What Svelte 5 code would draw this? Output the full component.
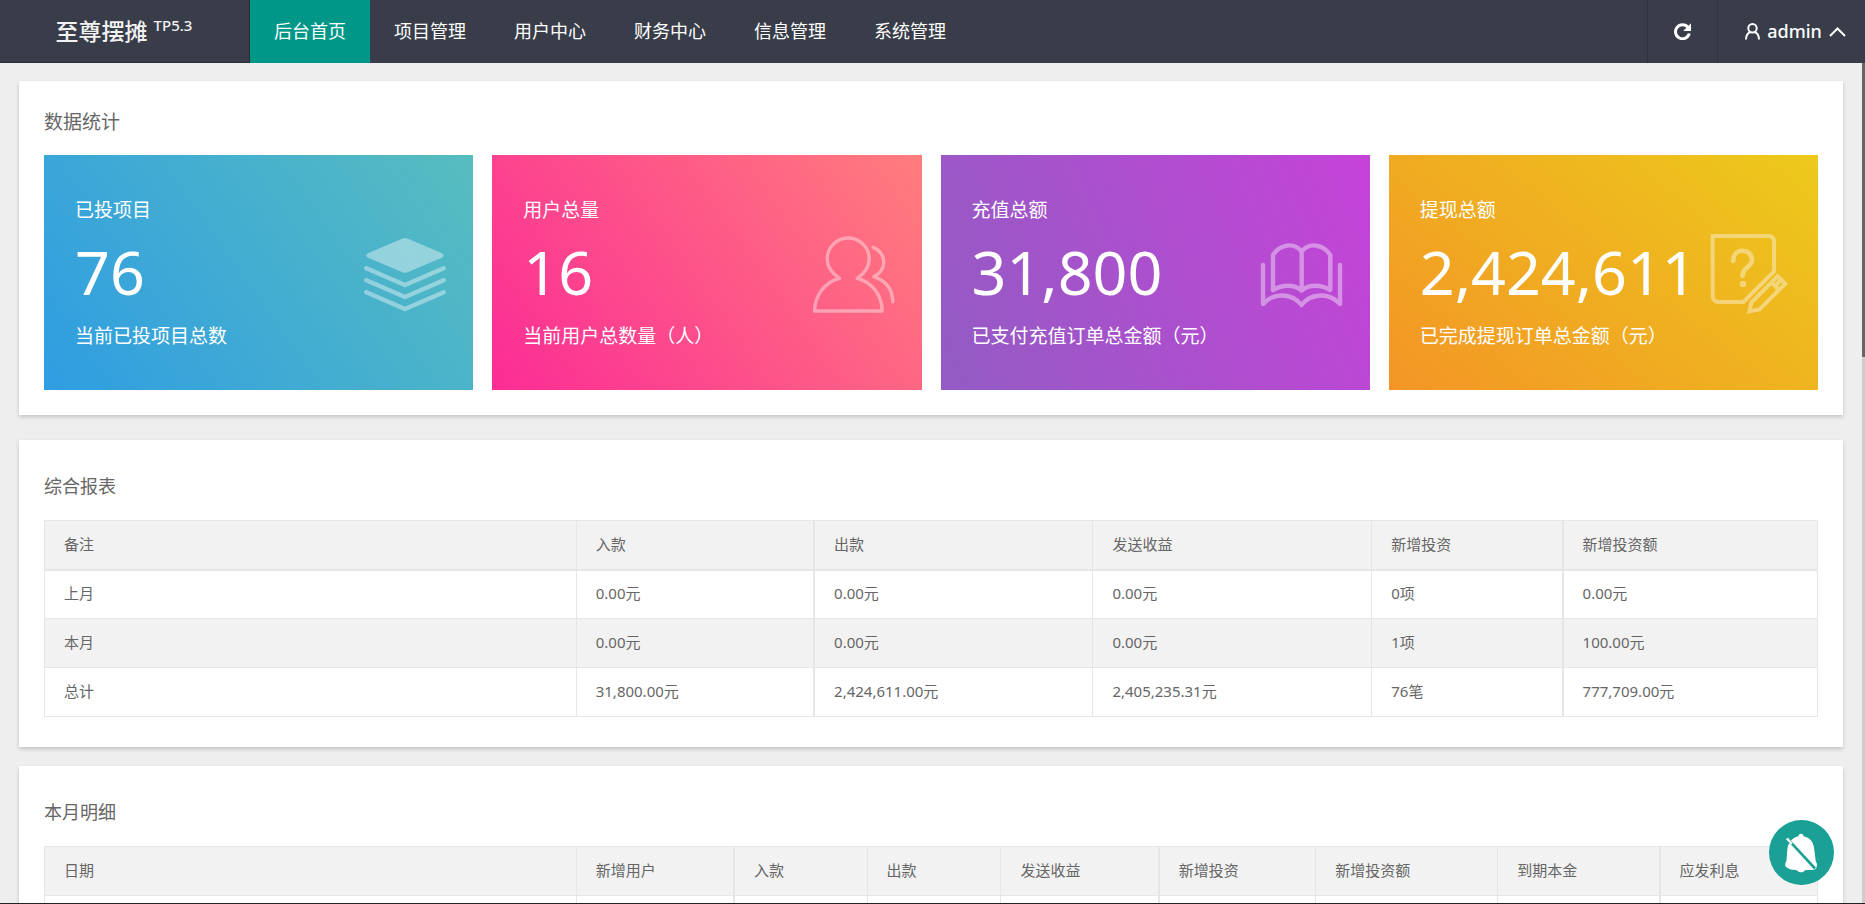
<script lang="ts">
	type Column = { label: string; width: number; heavy?: boolean };

	const menus = ['后台首页', '项目管理', '用户中心', '财务中心', '信息管理', '系统管理'];
	let active = $state('后台首页');

	const stats = [
		{ icon: 'layers', title: '已投项目', value: '76', note: '当前已投项目总数' },
		{ icon: 'users', title: '用户总量', value: '16', note: '当前用户总数量（人）' },
		{ icon: 'book', title: '充值总额', value: '31,800', note: '已支付充值订单总金额（元）' },
		{ icon: 'survey', title: '提现总额', value: '2,424,611', note: '已完成提现订单总金额（元）' }
	];

	// widths are relative, see share()
	const reportColumns: Column[] = [
		{ label: '备注', width: 532 },
		{ label: '入款', width: 238, heavy: true },
		{ label: '出款', width: 279 },
		{ label: '发送收益', width: 279 },
		{ label: '新增投资', width: 191, heavy: true },
		{ label: '新增投资额', width: 255 }
	];
	const reportRows = [
		['上月', '0.00元', '0.00元', '0.00元', '0项', '0.00元'],
		['本月', '0.00元', '0.00元', '0.00元', '1项', '100.00元'],
		['总计', '31,800.00元', '2,424,611.00元', '2,405,235.31元', '76笔', '777,709.00元']
	];

	const detailColumns: Column[] = [
		{ label: '日期', width: 532 },
		{ label: '新增用户', width: 158, heavy: true },
		{ label: '入款', width: 133 },
		{ label: '出款', width: 134 },
		{ label: '发送收益', width: 158, heavy: true },
		{ label: '新增投资', width: 157 },
		{ label: '新增投资额', width: 182 },
		{ label: '到期本金', width: 162, heavy: true },
		{ label: '应发利息', width: 158 }
	];
	const detailRows = [Array(detailColumns.length).fill('')];

	const share = (columns: Column[], width: number) =>
		(width / columns.reduce((sum, c) => sum + c.width, 0)) * 100;
</script>

{#snippet dataTable(columns: Column[], rows: string[][], ruled: boolean)}
	<table class:ruled>
		<colgroup>
			{#each columns as column}
				<col style="width: {share(columns, column.width)}%" />
			{/each}
		</colgroup>
		<thead>
			<tr>
				{#each columns as column}
					<th class:heavy={column.heavy}>{column.label}</th>
				{/each}
			</tr>
		</thead>
		<tbody>
			{#each rows as row}
				<tr>
					{#each row as cell, i}
						<td class:heavy={columns[i].heavy}>{cell}</td>
					{/each}
				</tr>
			{/each}
		</tbody>
	</table>
{/snippet}

<div class="layout">
	<header>
		<a class="logo" href="/">至尊摆摊 <sup>TP5.3</sup></a>
		<nav>
			{#each menus as menu}
				<a href="#{menu}" class:active={active === menu} onclick={() => (active = menu)}>{menu}</a>
			{/each}
		</nav>
		<button class="refresh" aria-label="刷新">
			<svg width="17" height="17" viewBox="0 0 17 17">
				<path d="M14 4.4A7 7 0 1 0 15.3 10.5" fill="none" stroke="#fff" stroke-width="3" />
				<path d="M17 .3V8H9.2z" fill="#fff" />
			</svg>
		</button>
		<button class="user">
			<svg width="15" height="17" viewBox="0 0 15 17">
				<circle cx="7.5" cy="5.2" r="4.2" />
				<path d="M1 16.5C1 12 3 9.8 5.6 9M14 16.5C14 12 12 9.8 9.4 9" />
			</svg>
			<span>admin</span>
			<svg width="17" height="10" viewBox="0 0 17 10">
				<path d="M1 9L8.5 1.5L16 9" />
			</svg>
		</button>
	</header>

	<div class="body">
		<main>
			<section class="card overview">
				<h2>数据统计</h2>
				<div class="stats">
					{#each stats as stat}
						<div class="stat {stat.icon}">
							<div>
								<div class="title">{stat.title}</div>
								<div class="value">{stat.value}</div>
								<div class="note">{stat.note}</div>
							</div>
							<svg width="84" height="84" viewBox="0 0 84 84">
								{#if stat.icon === 'layers'}
									<path
										class="solid"
										d="M39.5 7.6Q42 6.4 44.5 7.6L79 22.3Q82.5 24.5 79 26.7L44.5 41.2Q42 42.3 39.5 41.2L5 26.7Q1.5 24.5 5 22.3Z"
									/>
									<path
										stroke-width="4.4"
										d="M3.3 37.2L42 54L80.7 37.2M3.3 49.2L42 66L80.7 49.2M3.3 61.2L42 78L80.7 61.2"
									/>
								{:else if stat.icon === 'users'}
									<path
										stroke-width="3.4"
										d="M27.5 47.3C19.5 42 15.2 35 15.2 28A21 21 0 0 1 57.2 28C57.2 35 53 42 45.2 47.3C60 51 70 64 70.2 80H2.5C3 64 13 51 27.5 47.3Z"
									/>
									<path
										stroke-width="3.4"
										d="M61.2 16.3C68 19 71.8 25 71.8 31C71.8 37 68 42.5 61.8 45.7C73 49.5 80.5 58 80.8 70.7"
									/>
								{:else if stat.icon === 'book'}
									<g stroke-width="4.4">
										<path d="M3 34V73C14 61 32 62 41.5 74C51 62 69 61 80 73V34" />
										<path
											d="M13 59V24C20 13 34 11 41.7 20.5C49 11 63 13 70.3 24V59C61 53.5 49 53 41.7 59.5C34 53 22 53.5 13 59ZM41.7 20.5V59"
										/>
									</g>
								{:else}
									<g class="miter" stroke-width="4">
										<path d="M4.7 5H60Q66 5 66 11V40.3L35.3 71H11Q4.7 71 4.7 64Z" />
										<path
											d="M69.7 45.2L77.2 52.7L51.5 78.5L41.5 80.3L43.3 71.5ZM63.5 51.5L71 59M72.5 49.5L68 54"
										/>
									</g>
									<path
										stroke-width="4.6"
										d="M25.2 30C25.2 23.5 29 19.7 34.5 19.7C40 19.7 44 23.5 44 29C44 36 34.5 36 34.5 45"
									/>
									<circle class="solid" cx="35" cy="53" r="3.2" />
								{/if}
							</svg>
						</div>
					{/each}
				</div>
			</section>

			<section class="card">
				<h3>综合报表</h3>
				{@render dataTable(reportColumns, reportRows, true)}
			</section>

			<section class="card">
				<h3>本月明细</h3>
				{@render dataTable(detailColumns, detailRows, false)}
			</section>
		</main>
		<div class="scrollbar"><div class="thumb"></div></div>
	</div>

	<button class="notice" aria-label="消息提醒">
		<svg width="65" height="65" viewBox="0 0 65 65">
			<path
				fill="#fff"
				d="M32 13.8C33.5 13.8 34.5 14.8 34.6 16.2C41 17.5 44.5 22 45.2 29L46.8 41.5C48.3 43 48.3 46.5 47 48.5C46 50 43 50 37.5 50C35.5 50 35 52.3 32 52.3C29 52.3 28.5 50 26.5 50C23 50 20 49.5 17.5 47.3C15.8 46 15.7 43.5 17.3 41.5L18.5 28C19 25.5 19.8 24 20.8 22.8L17.2 19.3L18.8 17.7L22 20.5C24 18 27 16.7 29.5 16.2C29.5 14.8 30.5 13.8 32 13.8Z"
			/>
			<path d="M19.5 19.8L46 48.5" stroke="#1aa094" stroke-width="2.6" />
			<path d="M17.8 18.6L23 23.8" stroke="#fff" stroke-width="2" />
		</svg>
	</button>
</div>

<style>
	:global(body) {
		overflow: hidden;
	}

	.layout {
		display: flex;
		flex-direction: column;
		height: 100vh;
		box-sizing: border-box;
		border-bottom: 1px solid #222;
		background: #eee;
		color: #666;
		font-family: 'Noto Sans', 'Noto Sans CJK SC', sans-serif;
		font-size: 15px;
	}

	button {
		border: none;
		background: none;
		padding: 0;
		color: inherit;
		font: inherit;
		cursor: pointer;
	}

	a {
		color: inherit;
		text-decoration: none;
	}

	header {
		display: flex;
		flex: none;
		height: 63px;
		background: #393d49;
		color: #fff;
		font-size: 18px;
		line-height: 63px;
	}

	.logo {
		width: 250px;
		box-sizing: border-box;
		padding-right: 2px;
		box-shadow: inset -1px -1px 1px rgba(0, 0, 0, 0.25);
		color: #f2f2f2;
		font-size: 23px;
		font-weight: 500;
		text-align: center;
	}

	.logo sup {
		font-size: 15px;
		line-height: 1;
	}

	nav {
		display: flex;
		flex: 1;
	}

	nav a {
		padding: 0 24px;
	}

	nav a.active {
		background: #009688;
	}

	.refresh,
	.user {
		display: flex;
		align-items: center;
		justify-content: center;
		border-left: 1px solid #30333d;
	}

	.refresh {
		width: 70px;
	}

	.user {
		gap: 7px;
		width: 148px;
		padding-left: 8px;
		font-weight: 500;
	}

	.user svg {
		fill: none;
		stroke: #fff;
		stroke-width: 2;
	}

	.body {
		display: flex;
		flex: 1;
		min-height: 0;
	}

	main {
		flex: 1;
		min-width: 0;
		padding: 18px 19px 0;
		overflow: hidden;
	}

	.scrollbar {
		width: 3px;
		background: #ccc;
	}

	.thumb {
		height: 35%;
		background: #666;
	}

	.card {
		margin-bottom: 19px;
		padding: 31px 25px 30px;
		background: #fff;
		box-shadow: 0 2px 4px rgba(0, 0, 0, 0.18);
	}

	.overview {
		margin-bottom: 25px;
		padding: 26px 25px 25px;
	}

	h2,
	h3 {
		margin: 0 0 18px;
		font-size: 18px;
		font-weight: 400;
		line-height: 31px;
	}

	h2 {
		margin-bottom: 17px;
		font-size: 19px;
	}

	.stats {
		display: grid;
		grid-template-columns: repeat(4, 1fr);
		gap: 19px;
	}

	.stat {
		display: flex;
		align-items: center;
		justify-content: space-between;
		min-width: 0;
		padding: 31px 26px 30px 31px;
		color: #fff;
		font-size: 19px;
		line-height: 48px;
		white-space: nowrap;
	}

	.stat.layers {
		background: linear-gradient(-125deg, #57bdbf, #2f9de2);
	}

	.stat.users {
		background: linear-gradient(-125deg, #ff7d7d, #fb2c95);
	}

	.stat.book {
		background: linear-gradient(-113deg, #c543d8, #925cc3);
	}

	.stat.survey {
		background: linear-gradient(-141deg, #ecca1b, #f39526);
	}

	.stat svg {
		flex: none;
		fill: none;
		stroke: #fff;
		stroke-linecap: round;
		stroke-linejoin: round;
		opacity: 0.4;
	}

	.stat .solid {
		fill: #fff;
		stroke: none;
	}

	.stat .miter {
		stroke-linecap: butt;
		stroke-linejoin: miter;
	}

	.value {
		padding-bottom: 2px;
		font-size: 61px;
		line-height: 76px;
	}

	table {
		width: 100%;
		border-collapse: collapse;
		table-layout: fixed;
	}

	th,
	td {
		box-sizing: border-box;
		height: 49px;
		padding: 0 19px 2px;
		border: 1px solid #e6e6e6;
		font-weight: 400;
		line-height: 24px;
		text-align: left;
	}

	.heavy {
		border-right-width: 2px;
	}

	.ruled th {
		border-bottom-width: 2px;
	}

	thead tr,
	tbody tr:nth-child(even) {
		background: #f2f2f2;
	}

	.notice {
		position: fixed;
		right: 31px;
		bottom: 19px;
		width: 65px;
		height: 65px;
		border-radius: 50%;
		background: #1aa094;
	}

	.notice svg {
		display: block;
	}
</style>
